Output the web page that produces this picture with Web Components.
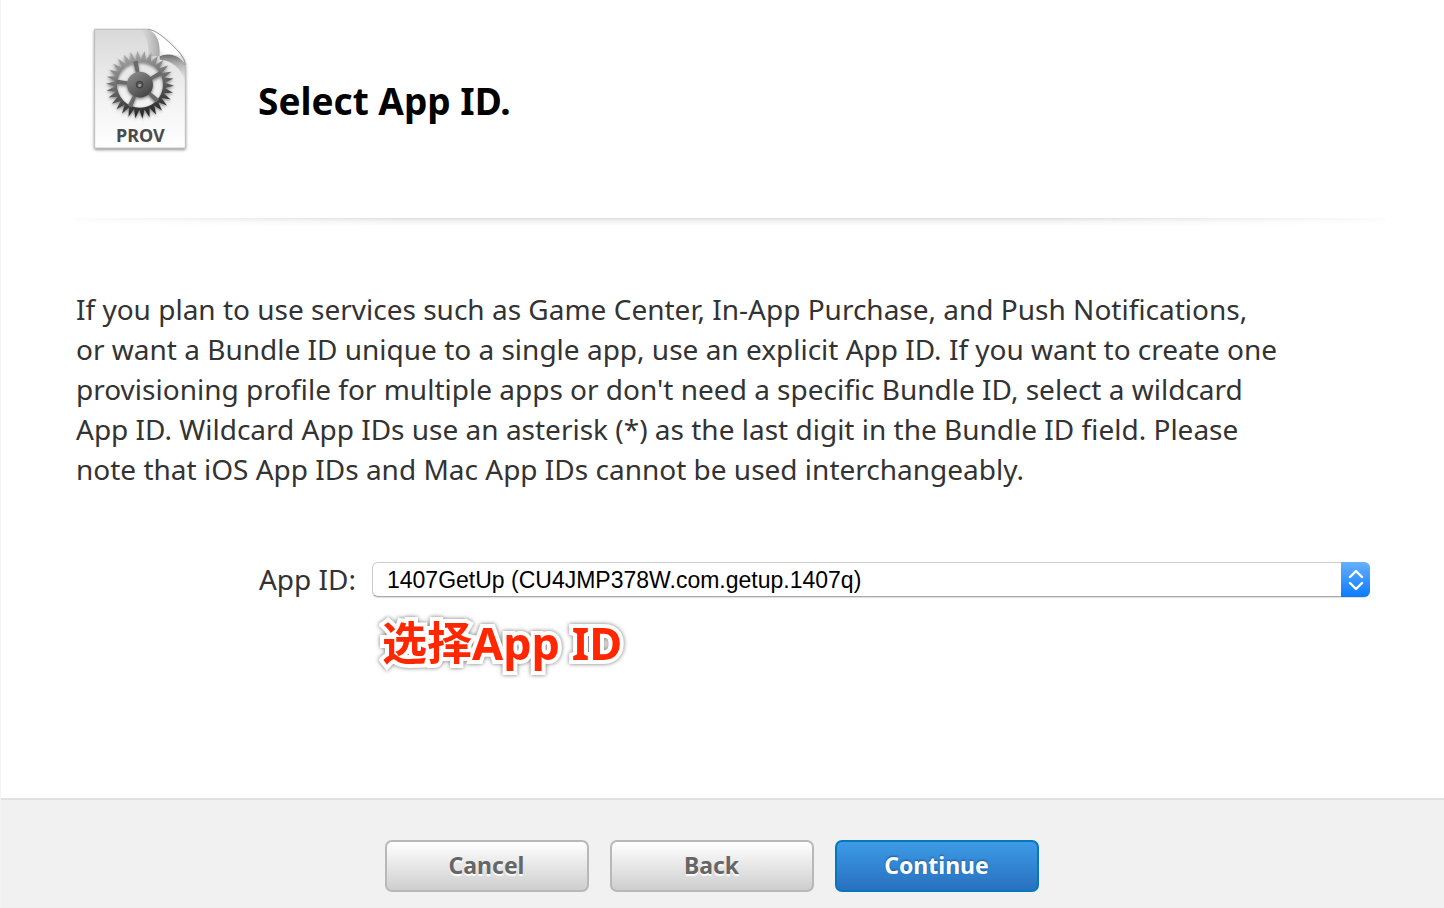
<!DOCTYPE html>
<html lang="en">
<head>
<meta charset="utf-8">
<title>Select App ID</title>
<style>
body { margin: 0; background: #fff; color: #333; font-family: "Noto Sans", "Noto Sans CJK SC", sans-serif; }
</style>
</head>
<body>
<wizard-page>
  <wizard-header slot="header">Select App ID.</wizard-header>
  <intro-text>If you plan to use services such as Game Center, In-App Purchase, and Push Notifications,<br>or want a Bundle ID unique to a single app, use an explicit App ID. If you want to create one<br>provisioning profile for multiple apps or don't need a specific Bundle ID, select a wildcard<br>App ID. Wildcard App IDs use an asterisk (*) as the last digit in the Bundle ID field. Please<br>note that iOS App IDs and Mac App IDs cannot be used interchangeably.</intro-text>
  <app-id-field label="App ID:" value="1407GetUp (CU4JMP378W.com.getup.1407q)"><callout-note>选择App ID</callout-note></app-id-field>
  <wizard-button slot="actions">Cancel</wizard-button>
  <wizard-button slot="actions">Back</wizard-button>
  <wizard-button slot="actions" primary>Continue</wizard-button>
</wizard-page>
<script>
function define(name, render) {
  customElements.define(name, class extends HTMLElement {
    connectedCallback() {
      if (this.shadowRoot) return;
      this.attachShadow({ mode: 'open' }).innerHTML = render(this);
    }
  });
}

define('wizard-page', () => `
<style>
:host { display: flex; flex-direction: column; min-height: 100vh; box-sizing: border-box; border-left: 1px solid #f4f4f4; }
main { flex: 1; padding: 15px 58px 0 75px; }
hr { border: 0; margin: 53px 0 0; height: 8px; background: linear-gradient(#dedede, #f3f3f3 40%, #fff);
  -webkit-mask-image: linear-gradient(90deg, #0002, #000 25%, #000 75%, #0002); mask-image: linear-gradient(90deg, #0002, #000 25%, #000 75%, #0002); }
footer { display: flex; justify-content: center; gap: 21px; padding: 40px 22px 16px 0; background: #f1f1f1; border-top: 2px solid #e2e2e2; }
</style>
<main><slot name="header"></slot><hr><slot></slot></main>
<footer><slot name="actions"></slot></footer>`);

define('wizard-header', () => `
<style>
:host { display: flex; align-items: center; gap: 58px; padding-left: 4px; }
h1 { margin: 0; padding-bottom: 4px; padding-top: 26px; font-size: 37px; line-height: 48px; font-weight: 700; color: #000; }
</style>
<prov-icon></prov-icon><h1><slot></slot></h1>`);

define('prov-icon', () => {
  const n = 30, cx = 180, cy = 209, pts = [];
  for (let i = 0; i < n * 2; i++) {
    const r = i % 2 ? 76 : 102, a = i * Math.PI / n + .03;
    pts.push((cx + r * Math.cos(a)).toFixed(1) + ',' + (cy + r * Math.sin(a)).toFixed(1));
  }
  const spokes = [-101, -29, 43, 115, 187].map(a => `<path d="M30-5L72-7V7L30 5Z" transform="translate(${cx} ${cy}) rotate(${a})"/>`).join('');
  return `
<style>
:host { display: block; flex: none; width: 120px; height: 150px; }
svg { display: block; width: 100%; height: 100%; }
text { font: 700 54px "Noto Sans", sans-serif; fill: #4b4b4b; }
</style>
<svg viewBox="0 0 360 450" aria-hidden="true">
<defs>
<linearGradient id="paper" x1="0" y1="0" x2="0" y2="1"><stop stop-color="#d9d9d9"/><stop offset=".55" stop-color="#f1f1f1"/><stop offset="1" stop-color="#fff"/></linearGradient>
<linearGradient id="gear" gradientUnits="userSpaceOnUse" x1="150" y1="110" x2="200" y2="310"><stop stop-color="#aaa"/><stop offset=".5" stop-color="#666"/><stop offset="1" stop-color="#202020"/></linearGradient>
<linearGradient id="hub" x1="0" y1="0" x2=".7" y2="1"><stop stop-color="#929292"/><stop offset="1" stop-color="#444"/></linearGradient>
<linearGradient id="curl" gradientUnits="userSpaceOnUse" x1="238" y1="124" x2="272" y2="86"><stop stop-color="#d8d8d8"/><stop offset=".4" stop-color="#fff"/><stop offset="1" stop-color="#fff"/></linearGradient>
<linearGradient id="shade" x1="0" y1="0" x2="1" y2="0"><stop stop-color="#aaa" stop-opacity="0"/><stop offset="1" stop-color="#888"/></linearGradient>
<linearGradient id="under" x1="0" y1="0" x2="0" y2="1"><stop stop-color="#555" stop-opacity=".85"/><stop offset=".4" stop-color="#888" stop-opacity=".5"/><stop offset="1" stop-color="#aaa" stop-opacity="0"/></linearGradient>
<filter id="drop" x="-20%" y="-20%" width="140%" height="140%"><feDropShadow dx="0" dy="4" stdDeviation="4" flood-opacity=".5"/></filter>
</defs>
<path d="M44 43H204C226 47 250 66 274 88C296 109 316 130 316 150V399H44Z" fill="url(#paper)" stroke="#aaa" stroke-width="2" filter="url(#drop)"/>
<path d="M180 44H204C232 54 242 82 239 124H205C208 88 200 60 180 44Z" fill="url(#shade)" opacity=".65"/>
<path d="M239 124C260 114 292 116 315 146V200C305 160 275 136 239 134Z" fill="url(#under)"/>
<path d="M204 43C230 53 243 80 239 123C256 116 284 116 303 124C298 111 286 99 274 88C250 65 226 45 204 43Z" fill="url(#curl)"/>
<path d="M204 43C226 45 250 65 274 88C296 109 314 128 316 150" fill="none" stroke="#999" stroke-width="3"/>
<g filter="url(#drop)">
<path fill="url(#gear)" fill-rule="evenodd" d="M${pts.join('L')}ZM249 209a69 69 0 1 0-138 0a69 69 0 1 0 138 0Z"/>
<g fill="#6b6b6b">${spokes}</g>
<circle cx="180" cy="209" r="39" fill="url(#hub)"/>
</g>
<circle cx="179" cy="209" r="10" fill="#555" stroke="#3d3d3d" stroke-width="3"/><circle cx="179" cy="211" r="5" fill="#999"/>
<text x="181" y="382" text-anchor="middle">PROV</text>
</svg>`;
});

define('intro-text', () => `
<style>
:host { display: block; margin-top: 63px; }
p { margin: 0; font-size: 28px; line-height: 40px; color: #333; }
</style><p><slot></slot></p>`);

define('app-id-field', el => `
<style>
:host { display: grid; grid-template-columns: 280px 1fr; column-gap: 16px; margin: 70px 16px 0 0; }
label { text-align: right; font-size: 28px; line-height: 40px; }
.box { display: grid; height: 35px; margin-top: 3px; }
select, .cap { grid-area: 1 / 1; }
select { appearance: none; min-width: 0; width: 100%; box-sizing: border-box; margin: 0; padding: 0 40px 0 14px; border: 1px solid #ccc; border-bottom-color: #aaa; border-radius: 6px; background: #fff; color: #000; font: 23px "Liberation Sans", Arial, sans-serif; box-shadow: 0 1px 1px #ddd; }
.cap { justify-self: end; display: grid; place-items: center; width: 29px; height: 35px; border-radius: 0 6px 6px 0; background: linear-gradient(#66b0fc, #0a7bff); pointer-events: none; }
.note { grid-column: 2; }
</style>
<label for="app">${el.getAttribute('label')}</label>
<div class="box"><select id="app"><option>${el.getAttribute('value')}</option></select>
<span class="cap"><svg width="16" height="22" viewBox="0 0 16 22" fill="none" stroke="#fff" stroke-width="2.4" stroke-linecap="round" stroke-linejoin="round" aria-hidden="true"><path d="M2 8L8 2L14 8M2 14L8 20L14 14"/></svg></span></div>
<div class="note"><slot></slot></div>`);

define('callout-note', () => `
<style>
:host { display: block; margin: 12px 0 0 10px; font-size: 45px; line-height: 64px; font-weight: 700; color: #ff2600; }
span { -webkit-text-stroke: 8px #fff; paint-order: stroke fill; stroke-linejoin: round; filter: drop-shadow(0 0 2px #777); }
</style><span><slot></slot></span>`);

define('wizard-button', () => `
<style>
:host { display: block; }
button { width: 204px; height: 52px; padding: 0 0 2px; border: 2px solid #b8b8b8; border-radius: 7px; background: linear-gradient(#fff, #cecece); color: #666; font: 700 23px "Noto Sans", sans-serif; text-shadow: 0 2px 1px #fff; }
:host([primary]) button { border-color: #0578bd; background: linear-gradient(#3d9be6, #2870c0); color: #fff; text-shadow: 0 -1px 2px #1c5797; }
</style><button type="button"><slot></slot></button>`);
</script>
</body>
</html>
